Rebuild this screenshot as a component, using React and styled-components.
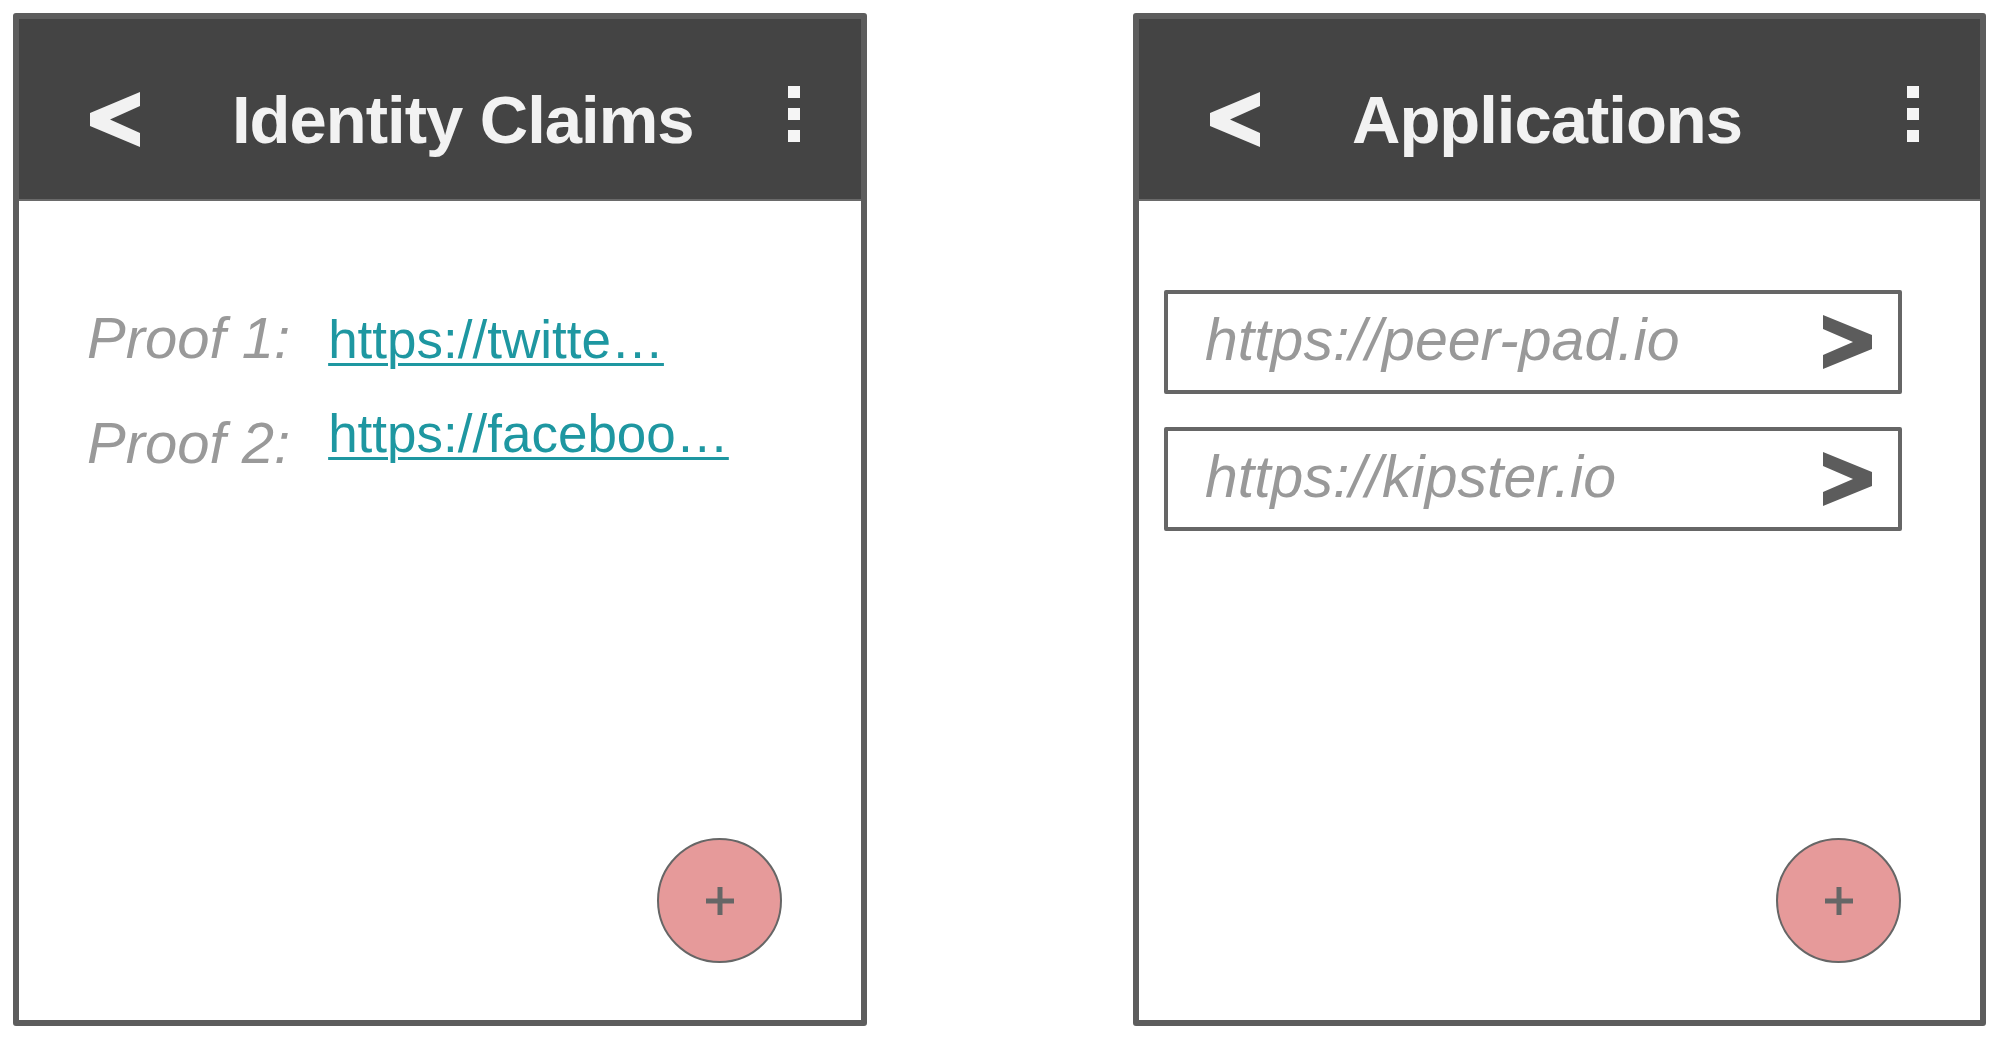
import React from 'react';
import styled, { createGlobalStyle } from 'styled-components';

const GlobalStyle = createGlobalStyle`
  html, body {
    margin: 0;
    padding: 0;
    background: #ffffff;
  }
  body {
    font-family: "Liberation Sans", Arial, sans-serif;
  }
`;

const Page = styled.div`
  display: flex;
  align-items: flex-start;
  gap: 266px;
  padding: 13px 0 0 13px;
`;

const Panel = styled.section`
  width: ${(p) => p.$width}px;
  height: 1013px;
  box-sizing: border-box;
  border: 6px solid #5d5d5d;
  border-radius: 3px;
  background: #fff;
  display: flex;
  flex-direction: column;
`;

const Header = styled.header`
  height: 182px;
  box-sizing: border-box;
  background: #444444;
  border-bottom: 2px solid #6a6a6a;
  padding: 20px 61px 0 71px;
  display: flex;
  align-items: center;
`;

const Title = styled.h1`
  margin: 0 0 0 92px;
  font-size: 67px;
  font-weight: 700;
  letter-spacing: -1px;
  color: #f2f2f2;
  line-height: normal;
`;

const Dots = styled.svg`
  margin-left: auto;
  margin-bottom: 10px;
  flex-shrink: 0;
`;

const Body = styled.div`
  flex: 1;
  display: flex;
  flex-direction: column;
  padding: ${(p) => p.$pad};
`;

const ProofGrid = styled.div`
  display: flex;
  align-items: flex-start;
  gap: 38px;
`;

const LabelCol = styled.div`
  display: flex;
  flex-direction: column;
`;

const Label = styled.span`
  font-size: 58px;
  font-style: italic;
  line-height: 105px;
  color: #999999;
`;

const LinkCol = styled.div`
  display: flex;
  flex-direction: column;
  margin-top: 8px;
`;

const ProofLink = styled.a`
  display: block;
  font-size: 53px;
  line-height: 94px;
  color: #1e97a1;
  text-decoration: underline;
  text-decoration-thickness: 3px;
  text-underline-offset: 5px;
`;

const AppList = styled.div`
  display: flex;
  flex-direction: column;
  gap: 33px;
`;

const AppRow = styled.div`
  width: 738px;
  height: 104px;
  box-sizing: border-box;
  border: 4px solid #666666;
  border-radius: 2px;
  padding: 0 26px 0 37px;
  display: flex;
  align-items: center;
  justify-content: space-between;
`;

const AppUrl = styled.span`
  font-size: 59px;
  font-style: italic;
  color: #999999;
  margin-top: -4px;
`;

const Fab = styled.button`
  margin: auto 79px 57px 0;
  align-self: flex-end;
  width: 125px;
  height: 125px;
  box-sizing: border-box;
  border-radius: 50%;
  border: 2px solid #666666;
  background: #e69a9a;
  display: flex;
  align-items: center;
  justify-content: center;
  padding: 0;
`;

const BackIcon = () => (
  <svg width="50" height="55" viewBox="0 0 50 55">
    <polygon points="50,0 50,14 20,27.5 50,41 50,55 0,34 0,21" fill="#f2f2f2" />
  </svg>
);

const MenuIcon = () => (
  <Dots width="12" height="56" viewBox="0 0 12 56">
    <rect x="0" y="0" width="12" height="12" fill="#f5f5f5" />
    <rect x="0" y="22" width="12" height="12" fill="#f5f5f5" />
    <rect x="0" y="44" width="12" height="12" fill="#f5f5f5" />
  </Dots>
);

const NextIcon = () => (
  <svg width="49" height="54" viewBox="0 0 49 54">
    <polygon points="0,0 49,20 49,34 0,54 0,40 30,27 0,14" fill="#5c5c5c" />
  </svg>
);

const PlusIcon = () => (
  <svg width="28" height="28" viewBox="0 0 28 28">
    <rect x="0" y="11.5" width="28" height="5" fill="#666666" />
    <rect x="11.5" y="0" width="5" height="28" fill="#666666" />
  </svg>
);

const PanelHeader = ({ title }) => (
  <Header>
    <BackIcon />
    <Title>{title}</Title>
    <MenuIcon />
  </Header>
);

const proofs = [
  { label: 'Proof 1:', url: 'https://twitte…' },
  { label: 'Proof 2:', url: 'https://faceboo…' },
];

const apps = ['https://peer-pad.io', 'https://kipster.io'];

const App = () => {
  return (
    <>
      <GlobalStyle />
      <Page>
        <Panel $width={854}>
          <PanelHeader title="Identity Claims" />
          <Body $pad="84px 0 0 68px">
            <ProofGrid>
              <LabelCol>
                {proofs.map((p) => (
                  <Label key={p.label}>{p.label}</Label>
                ))}
              </LabelCol>
              <LinkCol>
                {proofs.map((p) => (
                  <ProofLink key={p.url} href="#">
                    {p.url}
                  </ProofLink>
                ))}
              </LinkCol>
            </ProofGrid>
            <Fab>
              <PlusIcon />
            </Fab>
          </Body>
        </Panel>

        <Panel $width={853}>
          <PanelHeader title="Applications" />
          <Body $pad="89px 0 0 25px">
            <AppList>
              {apps.map((a) => (
                <AppRow key={a}>
                  <AppUrl>{a}</AppUrl>
                  <NextIcon />
                </AppRow>
              ))}
            </AppList>
            <Fab>
              <PlusIcon />
            </Fab>
          </Body>
        </Panel>
      </Page>
    </>
  );
};

export default App;
